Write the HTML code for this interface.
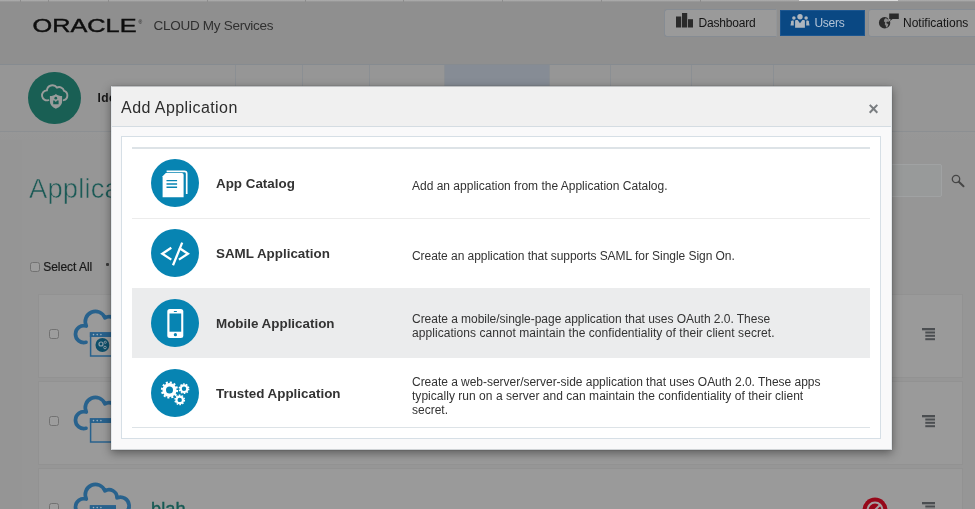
<!DOCTYPE html>
<html lang="en">
<head>
<meta charset="utf-8">
<title>Oracle Cloud My Services - Add Application</title>
<style>
*{box-sizing:border-box;margin:0;padding:0}
html,body{width:975px;height:509px;overflow:hidden}
body{position:relative;background:#969696;font-family:"Liberation Sans",Arial,Helvetica,sans-serif;color:#333}
.abs{position:absolute}
svg{position:absolute;overflow:visible}
/* ---------- dimmed page behind the dialog ---------- */
#topstrip{left:0;top:0;width:975px;height:2px;background:linear-gradient(#ababab 0,#a6a6a6 55%,#878787 100%)}
#topwhite{left:799px;top:0;width:99px;height:1px;background:#dcdcdc}
.topdiv{top:0;width:1px;height:2px;background:#8c8c8c}
#header{left:0;top:0;width:975px;height:65px;background:#8f8f8f;border-bottom:1px solid #868b90}
#navrow{left:0;top:65px;width:975px;height:67px;background:#969696;border-bottom:1px solid #8c8f92}
#leftband{left:0;top:132px;width:22px;height:377px;background:#959595}
#topband{left:0;top:132px;width:975px;height:8px;background:linear-gradient(#979797,#969696)}
.tabline{top:65px;width:1px;height:22px;background:#8b8f93}
#tabsel{left:444px;top:65px;width:106px;height:22px;background:#868c95}
#logo{left:32px;top:12px}
#cms{left:153.5px;top:17.5px;font-size:13.5px;letter-spacing:-0.28px;color:#303030;white-space:nowrap}
.hbtn{top:9px;height:28px;border:1px solid #868c93;background:#9a9a9a;border-radius:3px;font-size:12px;color:#141414;white-space:nowrap}
.hbtn span{position:absolute;top:6.1px}
#greenc{left:28.2px;top:71.5px;width:52.7px;height:52.7px;border-radius:50%;background:#195f54}
#ide{left:97.5px;top:91.1px;font-size:12px;letter-spacing:.4px;font-weight:700;color:#161616;white-space:nowrap}
#h1{left:29px;top:173px;font-size:27.4px;letter-spacing:0.15px;color:#1b5a56;font-weight:400;white-space:nowrap;-webkit-text-stroke:0.55px #969696}
#search{left:860px;top:164px;width:82px;height:33px;border:1px solid #a0a2a3;background:#989a9a;border-radius:2px}
#selall{left:43.3px;top:259.8px;font-size:12px;letter-spacing:-0.05px;color:#181818;-webkit-text-stroke:0.2px #181818;white-space:nowrap}
.cb{width:10px;height:10px;border:1px solid #727272;border-radius:2.5px;background:#9d9d9d}
.card{left:38px;width:925px;height:84px;background:#9a9a9a;border:1px solid #929292}
#blah{left:151px;top:498px;font-size:18.3px;color:#165a54;-webkit-text-stroke:0.35px #165a54;white-space:nowrap}
/* ---------- dialog ---------- */
#dlg{left:110.5px;top:86.4px;width:781px;height:363.6px;background:#f9f9fa;border:1px solid #e3e7ea;border-top-color:#bdbfc1;border-bottom-color:#cfd3d6;box-shadow:0 3px 9px rgba(0,0,0,.42), 0 0 1px rgba(0,0,0,.35)}
#dlgtitle{left:0;top:0;width:779px;height:39.6px;background:#f0f0f0;border-bottom:1px solid #d4dce2}
#dlgtitle .t{left:9.6px;top:11.9px;font-size:16px;letter-spacing:0.42px;color:#2d2d2d;white-space:nowrap}
#close{left:756.8px;top:11.6px;font-size:18px;font-weight:700;color:#797d80}
#panel{left:9.5px;top:48.6px;width:760px;height:303px;background:#fff;border:1px solid #d6dfe6}
.hr{left:10px;width:738px;height:1.5px;background:#dde3e7}
.row{left:10px;width:738px;height:69.8px}
.circ{left:18.6px;top:11px;width:48px;height:48px;border-radius:50%;background:#0784b2}
.circ svg{left:0;top:0}
.ttl{left:84px;top:28px;font-size:13.4px;font-weight:700;color:#333;white-space:nowrap}
.desc{left:280px;font-size:12px;line-height:14px;color:#333;white-space:nowrap}
</style>
</head>
<body>
<div id="stage" style="position:absolute;left:0;top:0;width:975px;height:509px;overflow:hidden;will-change:transform">
<!-- ===== dimmed background page ===== -->
<div class="abs" id="header"></div>
<div class="abs" id="topstrip"></div>
<div class="abs" id="topwhite"></div>
<div class="abs topdiv" style="left:20px"></div>
<div class="abs topdiv" style="left:48px"></div>
<div class="abs topdiv" style="left:108px"></div>
<div class="abs topdiv" style="left:207px"></div>
<div class="abs topdiv" style="left:305px"></div>
<div class="abs topdiv" style="left:403px"></div>
<div class="abs topdiv" style="left:502px"></div>
<div class="abs topdiv" style="left:601px"></div>
<div class="abs topdiv" style="left:700px"></div>
<svg class="abs" id="logo" width="120" height="28" viewBox="0 0 120 28"><text x="0.5" y="20.4" font-family="Liberation Sans, Arial, sans-serif" font-size="18.2" fill="#0e0e0e" stroke="#0e0e0e" stroke-width="0.4" textLength="104" lengthAdjust="spacingAndGlyphs">ORACLE</text><text x="106.5" y="12" font-family="Liberation Sans, Arial, sans-serif" font-size="5" fill="#1a1a1a">&#174;</text></svg>
<div class="abs" id="cms">CLOUD My Services</div>

<div class="abs hbtn" style="left:664px;width:113px;border-right-color:#939699;border-radius:3px 0 0 3px"><span style="left:33.5px;letter-spacing:-0.2px">Dashboard</span>
  <svg width="18" height="16" style="left:11px;top:3px"><rect x="0" y="3.5" width="5.2" height="11" fill="#2b2b2b"/><rect x="6" y="0" width="5.2" height="14.5" fill="#2b2b2b"/><rect x="12" y="6.2" width="5" height="8.3" fill="#2b2b2b"/></svg>
</div>
<div class="abs hbtn" style="left:780px;width:85px;top:10px;height:26.3px;background:#0a4883;border:1px solid #1c5690;border-radius:0;color:#b3c3d6"><span style="left:33.5px;top:5.1px;letter-spacing:-0.3px">Users</span>
  <svg width="20" height="15" style="left:9.4px;top:2.6px" viewBox="0 0 20 15"><g fill="#aeb6be"><circle cx="10" cy="2.700" r="2.700"/><path d="M5.100 13.800V7.300c0-.7.500-1.200 1.200-1.200h1.300L10 9.200l2.400-3.100h1.300c.7 0 1.200.5 1.200 1.200v6.500z"/><circle cx="3.900" cy="4" r="1.750"/><path d="M.5 11.500L1.200 7.300c.1-.5.500-.9 1-.9h1.500l.1 5.100z"/><circle cx="16.100" cy="4" r="1.750"/><path d="M19.500 11.500L18.800 7.300c-.1-.5-.5-.9-1-.9h-1.500l-.1 5.100z"/></g></svg>
</div>
<div class="abs hbtn" style="left:868px;width:120px"><span style="left:34px">Notifications</span>
  <svg width="22" height="17" style="left:10px;top:3px" viewBox="0 0 22 17"><circle cx="5.600" cy="9.700" r="5.700" fill="#2b2b2b"/><path d="M6.200 5.200l2.200.6.900 1.600-.6 1.300-1.300.2.300 1.500 1.600.6-.5 2.200-1.700 1.600-.4-2.200-1-1.300.5-1.700-1.300-1.300.4-1.700z" fill="#8a8a8a"/><path d="M9.300 0.200h11v6.500h-8.500l-2.500 2.600z" fill="#9a9a9a"/><path d="M10.200 0.500h9.600v5.400h-6.300l-2.500 2.200.6-2.200h-1.400z" fill="#2b2b2b"/></svg>
</div>

<div class="abs" id="navrow"></div>
<div class="abs" id="tabsel"></div>
<div class="abs tabline" style="left:235px"></div>
<div class="abs tabline" style="left:302px"></div>
<div class="abs tabline" style="left:369px"></div>
<div class="abs tabline" style="left:444px"></div>
<div class="abs tabline" style="left:549px"></div>
<div class="abs tabline" style="left:610px"></div>
<div class="abs tabline" style="left:691px"></div>
<div class="abs tabline" style="left:773px"></div>
<div class="abs" id="greenc">
  <svg width="53" height="53" viewBox="0 0 53 53" style="left:0.9px;top:-0.2px"><path d="M19.400 29.200A5 5 0 1 1 17.900 19.400A5.600 5.600 0 0 1 28 16.600A5 5 0 0 1 35 19.800A4.900 4.900 0 0 1 34.700 29.200" fill="none" stroke="#999c9b" stroke-width="1.900" stroke-linecap="round"/><path d="M26.900 23.100C28.600 24.500 30.800 25.100 33.100 25.100V30.500C33.100 33.800 30.500 36.200 26.900 37.700C23.300 36.200 20.900 33.800 20.900 30.500V25.100C23.200 25.100 25.200 24.500 26.900 23.100z" fill="#999c9b"/><circle cx="26.800" cy="27.200" r="1.350" fill="#195f54"/><path d="M24.200 33.300V29.500h1.200L26.800 31.100L28.200 29.500h1.400V33.300z" fill="#195f54"/></svg>
</div>
<div class="abs" id="ide">Identity</div>

<div class="abs" id="leftband"></div>
<div class="abs" id="topband"></div>
<div class="abs" id="h1">Applications</div>
<div class="abs" id="search"></div>
<svg width="14" height="14" style="left:951px;top:174px" viewBox="0 0 14 14"><circle cx="5" cy="5" r="3.700" fill="none" stroke="#464646" stroke-width="1.300"/><path d="M7.800 7.800L12.500 12.200" stroke="#464646" stroke-width="2" stroke-linecap="round"/></svg>
<div class="abs cb" style="left:30px;top:262px"></div>
<div class="abs" id="selall">Select All</div>
<div class="abs" style="left:105.500px;top:262.500px;width:3.500px;height:3.500px;background:#3a3a3a;border-radius:1px"></div>

<div class="abs card" style="top:294px"></div>
<div class="abs card" style="top:381px"></div>
<div class="abs card" style="top:468px"></div>
<div class="abs cb" style="left:49px;top:329px"></div>
<div class="abs cb" style="left:49px;top:416px"></div>
<div class="abs cb" style="left:49px;top:503px"></div>

<!-- cloud app icons -->
<svg id="cloud1" width="70" height="70" style="left:70px;top:294.6px" viewBox="70 0 70 70"><g><path d="M86 47.300A8.450 8.450 0 1 1 86.300 31A10.170 10.170 0 1 1 104.900 22.800A8 8 0 0 1 117 29.800A8.750 8.750 0 1 1 118.500 46.400" fill="none" stroke="#28628d" stroke-width="3.700" stroke-linecap="round" stroke-linejoin="round"/><rect x="90.600" y="38" width="24.600" height="23" fill="none" stroke="#28628d" stroke-width="1.500"/><rect x="89.850" y="37.300" width="26.100" height="4.700" fill="#28628d"/><circle cx="93.500" cy="39.600" r=".8" fill="#9db0bf"/><circle cx="97.200" cy="39.600" r=".8" fill="#9db0bf"/><circle cx="100.900" cy="39.600" r=".8" fill="#9db0bf"/></g><circle cx="102.400" cy="50" r="6.900" fill="#0e4f6a"/><circle cx="101" cy="49" r="2" fill="none" stroke="#8e9ea8" stroke-width="1.200"/><circle cx="105" cy="52.500" r="1.300" fill="none" stroke="#8e9ea8" stroke-width="1"/><circle cx="105.300" cy="47.300" r="1.100" fill="none" stroke="#8e9ea8" stroke-width=".9"/></svg>
<svg id="cloud2" width="70" height="70" style="left:70px;top:381.4px" viewBox="70 0 70 70"><g><path d="M86 47.300A8.450 8.450 0 1 1 86.300 31A10.170 10.170 0 1 1 104.900 22.800A8 8 0 0 1 117 29.800A8.750 8.750 0 1 1 118.500 46.400" fill="none" stroke="#28628d" stroke-width="3.700" stroke-linecap="round" stroke-linejoin="round"/><rect x="90.600" y="38" width="24.600" height="23" fill="none" stroke="#28628d" stroke-width="1.500"/><rect x="89.850" y="37.300" width="26.100" height="4.700" fill="#28628d"/><circle cx="93.500" cy="39.600" r=".8" fill="#9db0bf"/><circle cx="97.200" cy="39.600" r=".8" fill="#9db0bf"/><circle cx="100.900" cy="39.600" r=".8" fill="#9db0bf"/></g></svg>
<svg id="cloud3" width="70" height="70" style="left:70px;top:468.2px" viewBox="70 0 70 70"><g><path d="M86 47.300A8.450 8.450 0 1 1 86.300 31A10.170 10.170 0 1 1 104.900 22.800A8 8 0 0 1 117 29.800A8.750 8.750 0 1 1 118.500 46.400" fill="none" stroke="#28628d" stroke-width="3.700" stroke-linecap="round" stroke-linejoin="round"/><rect x="90.600" y="38" width="24.600" height="23" fill="none" stroke="#28628d" stroke-width="1.500"/><rect x="89.850" y="37.300" width="26.100" height="4.700" fill="#28628d"/><circle cx="93.500" cy="39.600" r=".8" fill="#9db0bf"/><circle cx="97.200" cy="39.600" r=".8" fill="#9db0bf"/><circle cx="100.900" cy="39.600" r=".8" fill="#9db0bf"/></g></svg>

<!-- row action icons -->
<svg width="14" height="13" style="left:922px;top:327.500px"><g fill="#4b4e51"><rect x="0" y="0" width="13" height="2.300"/><rect x="3.300" y="3.500" width="9.700" height="2"/><rect x="3.300" y="6.800" width="9.700" height="2"/><rect x="3.300" y="10.200" width="9.700" height="2"/></g></svg>
<svg width="14" height="13" style="left:922px;top:414.500px"><g fill="#4b4e51"><rect x="0" y="0" width="13" height="2.300"/><rect x="3.300" y="3.500" width="9.700" height="2"/><rect x="3.300" y="6.800" width="9.700" height="2"/><rect x="3.300" y="10.200" width="9.700" height="2"/></g></svg>
<svg width="14" height="13" style="left:922px;top:501.500px"><g fill="#4b4e51"><rect x="0" y="0" width="13" height="2.300"/><rect x="3.300" y="3.500" width="9.700" height="2"/><rect x="3.300" y="6.800" width="9.700" height="2"/><rect x="3.300" y="10.200" width="9.700" height="2"/></g></svg>
<svg width="28" height="28" style="left:861.4px;top:496.2px" viewBox="0 0 28 28"><circle cx="14" cy="14" r="13.100" fill="#a1a3a3"/><circle cx="14" cy="14" r="12.500" fill="#960819"/><circle cx="14" cy="14" r="7.400" fill="none" stroke="#a5a1a2" stroke-width="2"/><path d="M8.500 19.500L19.500 8.500" stroke="#a5a1a2" stroke-width="2"/></svg>
<div class="abs" id="blah">blah</div>

<!-- ===== dialog ===== -->
<div class="abs" id="dlg">
  <div class="abs" id="dlgtitle">
    <div class="abs t">Add Application</div>
    <div class="abs" id="close">&times;</div>
  </div>
  <div class="abs" id="panel">
    <div class="abs hr" style="top:10.2px"></div>
    <div class="abs row" style="top:11.3px">
      <div class="abs circ"><svg width="48" height="48" viewBox="0 0 48 48"><path d="M15.600 12.400H33.400A2.300 2.300 0 0 1 35.700 14.700V34.900" fill="none" stroke="#fff" stroke-width="1.700"/><path d="M14.800 14.100H30.900A1.700 1.700 0 0 1 32.600 15.800V38.300H11.600V17.300z" fill="#fff"/><path d="M15.500 21.600h10.600M15.500 25h10.600M15.500 28.300h10.600" stroke="#0784b2" stroke-width="1.450"/></svg></div>
      <div class="abs ttl">App Catalog</div>
      <div class="abs desc" style="top:31.2px">Add an application from the Application Catalog.</div>
    </div>
    <div class="abs hr" style="top:80.6px;background:#ececec;height:1px"></div>
    <div class="abs row" style="top:81.1px">
      <div class="abs circ"><svg width="48" height="48" viewBox="0 0 48 48"><path d="M20.300 18.800L11.300 24.700L20.300 30.600M31.200 13.600L22 36.200M27.900 18.800L36.900 24.700L27.900 30.600" fill="none" stroke="#fff" stroke-width="2.300"/></svg></div>
      <div class="abs ttl">SAML Application</div>
      <div class="abs desc" style="top:31.4px;letter-spacing:-0.05px">Create an application that supports SAML for Single Sign On.</div>
    </div>
    <div class="abs row" style="top:150.9px;background:#ebeced">
      <div class="abs circ"><svg width="48" height="48" viewBox="0 0 48 48"><rect x="16.300" y="10.100" width="16" height="28.800" rx="2.500" fill="#fff"/><rect x="18.500" y="14.500" width="11.700" height="18.200" fill="#0784b2"/><circle cx="24.400" cy="35.700" r="1.600" fill="#0784b2"/><rect x="22.700" y="12.100" width="3.300" height=".9" rx=".4" fill="#0784b2"/></svg></div>
      <div class="abs ttl">Mobile Application</div>
      <div class="abs desc" style="top:24.3px"><span style="letter-spacing:-0.03px">Create a mobile/single-page application that uses OAuth 2.0. These</span><br><span style="letter-spacing:0.06px">applications cannot maintain the confidentiality of their client secret.</span></div>
    </div>
    <div class="abs row" style="top:220.7px">
      <div class="abs circ"><svg width="48" height="48" viewBox="0 0 48 48"><g fill="none" stroke="#fff"><circle cx="18.500" cy="21" r="5.300" stroke-width="3.600"/><circle cx="18.500" cy="21" r="7.600" stroke-width="2" stroke-dasharray="2.100 1.880"/><circle cx="33" cy="19.700" r="3.300" stroke-width="2.200"/><circle cx="33" cy="19.700" r="4.700" stroke-width="1.400" stroke-dasharray="1.600 1.350"/><circle cx="28.700" cy="30.900" r="3.300" stroke-width="2.200"/><circle cx="28.700" cy="30.900" r="4.700" stroke-width="1.400" stroke-dasharray="1.600 1.350"/></g></svg></div>
      <div class="abs ttl">Trusted Application</div>
      <div class="abs desc" style="top:17.4px"><span style="letter-spacing:-0.03px">Create a web-server/server-side application that uses OAuth 2.0. These apps</span><br><span style="letter-spacing:0.03px">typically run on a server and can maintain the confidentiality of their client</span><br>secret.</div>
    </div>
    <div class="abs hr" style="top:290px;height:1px"></div>
  </div>
</div>
</div>
</body>
</html>
